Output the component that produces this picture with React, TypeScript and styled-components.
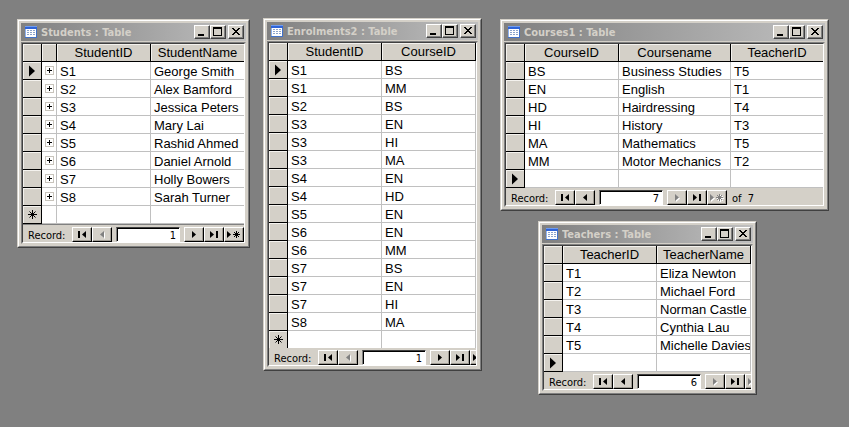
import React from "react";
import styled, { createGlobalStyle } from "styled-components";

const face = "#d4d0c8";
const tahoma = '"DejaVu Sans Condensed", Tahoma, "DejaVu Sans", sans-serif';

const GlobalStyle = createGlobalStyle`
  *, *::before, *::after { box-sizing: border-box; }
  body { margin: 0; background: #808080; }
`;

const Desktop = styled.main`
  position: relative;
  min-height: 100vh;
  overflow: hidden;
  background: #808080;
  color: #000;
`;

const Frame = styled.section<{ $x: number; $y: number; $w: number }>`
  position: absolute;
  left: ${(p) => p.$x}px;
  top: ${(p) => p.$y}px;
  width: ${(p) => p.$w}px;
  background: ${face};
  border: 1px solid;
  border-color: ${face} #404040 #404040 ${face};
`;

const FrameEdge = styled.div`
  padding: 2px;
  border: 1px solid;
  border-color: #fff #808080 #808080 #fff;
`;

const TitleBar = styled.header`
  display: flex;
  align-items: center;
  height: 18px;
  margin-bottom: 1px;
  padding: 0 2px 0 4px;
  background: linear-gradient(to right, #808080, #c0c0c0);
`;

const Title = styled.h2`
  flex: 1;
  min-width: 0;
  margin: 0 0 0 3px;
  padding-top: 1px;
  overflow: hidden;
  white-space: nowrap;
  color: ${face};
  font: bold 11px/17px ${tahoma};
`;

const Caption = styled.button<{ $gap?: boolean }>`
  flex: none;
  width: 16px;
  height: 14px;
  margin: 0 0 0 ${(p) => (p.$gap ? 2 : 0)}px;
  padding: 0;
  border: 1px solid;
  border-color: #fff #404040 #404040 #fff;
  box-shadow: inset -1px -1px #808080;
  background: ${face};
  svg { display: block; }
`;

const Client = styled.div`
  border: 1px solid;
  border-color: #808080 ${face} ${face} #808080;
`;

const Well = styled.div`
  border: 1px solid;
  border-color: #404040 #fff #fff #404040;
`;

const Sheet = styled.table`
  width: 100%;
  table-layout: fixed;
  border-collapse: separate;
  border-spacing: 0;
  background: #fff;
  font: 13px/17px "Liberation Sans", Arial, sans-serif;
`;

const Col = styled.col<{ $w?: number }>`
  width: ${(p) => (p.$w ? `${p.$w}px` : "auto")};
`;

const Head = styled.th<{ $open?: boolean }>`
  height: 18px;
  padding: 0;
  background: ${face};
  border-right: ${(p) => (p.$open ? 0 : 1)}px solid #000;
  border-bottom: 1px solid #000;
  box-shadow: inset 1px 1px #f4f2ee;
  font-weight: normal;
  text-align: center;
  white-space: nowrap;
`;

const Selector = styled.th<{ $last?: boolean }>`
  height: ${(p) => (p.$last ? 17 : 18)}px;
  padding: 0;
  background: ${face};
  border-right: 1px solid #000;
  border-bottom: ${(p) => (p.$last ? 0 : 1)}px solid #000;
  box-shadow: inset 1px 1px #f4f2ee;
  line-height: 0;
  svg { display: block; margin: 0 auto; }
`;

const Cell = styled.td<{ $open?: boolean; $last?: boolean }>`
  height: ${(p) => (p.$last ? 17 : 18)}px;
  padding: 2px 0 0 3px;
  overflow: hidden;
  white-space: nowrap;
  line-height: 15px;
  border-right: ${(p) => (p.$open ? 0 : 1)}px solid #c0c0c0;
  border-bottom: ${(p) => (p.$last ? 0 : 1)}px solid #c0c0c0;
`;

const Expander = styled.button`
  display: block;
  width: 9px;
  height: 9px;
  padding: 0;
  border: 1px solid #c8c4bc;
  background: #fff;
  svg { display: block; }
`;

const ExpandCell = styled(Cell)`
  padding-top: 0;
`;

const Nav = styled.nav<{ $ruled?: boolean }>`
  display: flex;
  align-items: flex-end;
  height: ${(p) => (p.$ruled ? 18 : 17)}px;
  overflow: hidden;
  background: ${face};
  border-top: ${(p) => (p.$ruled ? 1 : 0)}px solid #808080;
  font: 11px/13px ${tahoma};
  white-space: pre;
`;

const NavLabel = styled.label`
  flex: none;
  width: 49px;
  padding-left: 5px;
`;

const NavButton = styled.button`
  flex: none;
  width: 20px;
  height: 15px;
  padding: 0;
  border: 1px solid;
  border-color: #fff #000 #000 #fff;
  box-shadow: inset -1px -1px #a09c94;
  background: ${face};
  svg { display: block; }
`;

const RecordBox = styled.input`
  flex: none;
  width: 64px;
  height: 15px;
  margin: 0 4px;
  padding: 1px 3px 0 0;
  border: 1px solid;
  border-color: #404040 #fff #fff #808080;
  border-radius: 0;
  box-shadow: inset 1px 1px #000;
  background: #fff;
  font: 11px/12px ${tahoma};
  text-align: right;
  outline: none;
`;

const Total = styled.span`
  padding-left: 5px;
`;

const TableIcon = () => (
  <svg width="13" height="13" shapeRendering="crispEdges" aria-hidden="true">
    <rect width="12" height="12" fill="#fff" />
    <rect width="12" height="3" fill="#2f64d8" />
    <rect width="12" height="1" fill="#6f9cf0" />
    <rect y="3" width="1" height="9" fill="#8fb2ee" />
    <rect x="11" y="3" width="1" height="9" fill="#4272c8" />
    <rect y="11" width="12" height="1" fill="#4272c8" />
    <path d="M2 4h2v1H2zM5 4h2v1H5zM8 4h2v1H8zM2 6h2v1H2zM5 6h2v1H5zM8 6h2v1H8zM2 8h2v1H2zM5 8h2v1H5zM8 8h2v1H8z" fill="#8ca4cc" />
  </svg>
);

const starPath = "M4.5 0v9M0 4.5h9M1.5 1.5l6 6M7.5 1.5l-6 6";

const Marker = ({ kind }: { kind?: "current" | "new" }) => {
  if (kind === "current")
    return (
      <svg width="8" height="12" aria-label="Current record">
        <path d="M1 0.5L7 6L1 11.5z" fill="#000" />
      </svg>
    );
  if (kind === "new")
    return (
      <svg width="9" height="9" aria-label="New record">
        <path d={starPath} stroke="#000" fill="none" />
      </svg>
    );
  return null;
};

type Glyph = "first" | "prev" | "next" | "last" | "new";
const glyphs: Record<Glyph, React.ReactNode> = {
  first: (
    <>
      <path d="M5 3h2v7H5z" />
      <path d="M13 3v7L9 6.5z" />
    </>
  ),
  prev: <path d="M11 3v7L7 6.5z" />,
  next: <path d="M7 3v7l4-3.5z" />,
  last: (
    <>
      <path d="M5 3v7l4-3.5z" />
      <path d="M11 3h2v7h-2z" />
    </>
  ),
  new: (
    <>
      <path d="M2 3v7l4-3.5z" />
      <path
        d="M11.5 3v7M8 6.5h7M9 4l5 5M14 4l-5 5"
        fill="none"
        stroke="currentColor"
      />
    </>
  ),
};
const glyphNames: Record<Glyph, string> = {
  first: "First record",
  prev: "Previous record",
  next: "Next record",
  last: "Last record",
  new: "New record",
};

const Step = ({ glyph, off }: { glyph: Glyph; off?: boolean }) => (
  <NavButton type="button" aria-label={glyphNames[glyph]} disabled={off}>
    <svg width="18" height="13" aria-hidden="true">
      {off && (
        <g transform="translate(1 1)" fill="#fff" color="#fff">
          {glyphs[glyph]}
        </g>
      )}
      <g fill="currentColor" color={off ? "#808080" : "#000"}>
        {glyphs[glyph]}
      </g>
    </svg>
  </NavButton>
);

interface Datasheet {
  name: string;
  x: number;
  y: number;
  width: number;
  columns: { label: string; width?: number }[];
  rows: string[][];
  current: number;
  record: number;
  expandable?: boolean;
  openEdge?: boolean;
  shortEnd?: boolean;
  atEnd?: boolean;
  total?: number;
}

const sheets: Datasheet[] = [
  {
    name: "Students",
    x: 17,
    y: 19,
    width: 233,
    columns: [{ label: "StudentID", width: 94 }, { label: "StudentName" }],
    rows: [
      ["S1", "George Smith"],
      ["S2", "Alex Bamford"],
      ["S3", "Jessica Peters"],
      ["S4", "Mary Lai"],
      ["S5", "Rashid Ahmed"],
      ["S6", "Daniel Arnold"],
      ["S7", "Holly Bowers"],
      ["S8", "Sarah Turner"],
    ],
    current: 0,
    record: 1,
    expandable: true,
    openEdge: true,
  },
  {
    name: "Enrolments2",
    x: 263,
    y: 18,
    width: 219,
    columns: [{ label: "StudentID", width: 94 }, { label: "CourseID" }],
    rows: [
      ["S1", "BS"],
      ["S1", "MM"],
      ["S2", "BS"],
      ["S3", "EN"],
      ["S3", "HI"],
      ["S3", "MA"],
      ["S4", "EN"],
      ["S4", "HD"],
      ["S5", "EN"],
      ["S6", "EN"],
      ["S6", "MM"],
      ["S7", "BS"],
      ["S7", "EN"],
      ["S7", "HI"],
      ["S8", "MA"],
    ],
    current: 0,
    record: 1,
    shortEnd: true,
  },
  {
    name: "Courses1",
    x: 500,
    y: 19,
    width: 329,
    columns: [
      { label: "CourseID", width: 94 },
      { label: "Coursename", width: 112 },
      { label: "TeacherID" },
    ],
    rows: [
      ["BS", "Business Studies", "T5"],
      ["EN", "English", "T1"],
      ["HD", "Hairdressing", "T4"],
      ["HI", "History", "T3"],
      ["MA", "Mathematics", "T5"],
      ["MM", "Motor Mechanics", "T2"],
    ],
    current: 6,
    record: 7,
    openEdge: true,
    atEnd: true,
    total: 7,
  },
  {
    name: "Teachers",
    x: 538,
    y: 221,
    width: 219,
    columns: [{ label: "TeacherID", width: 94 }, { label: "TeacherName" }],
    rows: [
      ["T1", "Eliza Newton"],
      ["T2", "Michael Ford"],
      ["T3", "Norman Castle"],
      ["T4", "Cynthia Lau"],
      ["T5", "Michelle Davies"],
    ],
    current: 5,
    record: 6,
    atEnd: true,
  },
];

const SheetWindow = ({ sheet }: { sheet: Datasheet }) => {
  const { columns, rows, current, expandable, openEdge, atEnd } = sheet;
  const allRows = [...rows, columns.map(() => "")];
  const isOpen = (i: number) => openEdge && i === columns.length - 1;
  const boxId = `${sheet.name}-record`;
  return (
    <Frame $x={sheet.x} $y={sheet.y} $w={sheet.width}>
      <FrameEdge>
        <TitleBar>
          <TableIcon />
          <Title>{sheet.name} : Table</Title>
          <Caption type="button" aria-label="Minimize">
            <svg width="14" height="12" shapeRendering="crispEdges">
              <rect x="3" y="8" width="6" height="2" />
            </svg>
          </Caption>
          <Caption type="button" aria-label="Maximize">
            <svg width="14" height="12" shapeRendering="crispEdges">
              <path d="M2 1h9v9H2zM3 3v6h7V3z" fillRule="evenodd" />
            </svg>
          </Caption>
          <Caption type="button" aria-label="Close" $gap>
            <svg width="14" height="12" shapeRendering="crispEdges">
              <path d="M3 2h2v1h1v1h2V3h1V2h2v1h-1v1H9v1H8v1h1v1h1v1h1v1H9V8H8V7H6v1H5v1H3V8h1V7h1V6h1V5H5V4H4V3H3z" />
            </svg>
          </Caption>
        </TitleBar>
        <Client>
          <Well>
            <Sheet>
              <colgroup>
                <Col $w={19} />
                {expandable && <Col $w={15} />}
                {columns.map((c) => (
                  <Col key={c.label} $w={c.width} />
                ))}
              </colgroup>
              <thead>
                <tr>
                  <Head />
                  {expandable && <Head />}
                  {columns.map((c, i) => (
                    <Head key={c.label} scope="col" $open={isOpen(i)}>
                      {c.label}
                    </Head>
                  ))}
                </tr>
              </thead>
              <tbody>
                {allRows.map((row, r) => {
                  const blank = r === rows.length;
                  const last = blank && sheet.shortEnd;
                  const kind =
                    r === current ? "current" : blank ? "new" : undefined;
                  return (
                    <tr key={r}>
                      <Selector scope="row" $last={last}>
                        <Marker kind={kind} />
                      </Selector>
                      {expandable && (
                        <ExpandCell>
                          {!blank && (
                            <Expander
                              type="button"
                              aria-label={`Expand ${row[0]}`}
                            >
                              <svg
                                width="7"
                                height="7"
                                shapeRendering="crispEdges"
                              >
                                <path d="M3 1h1v2h2v1H4v2H3V4H1V3h2z" />
                              </svg>
                            </Expander>
                          )}
                        </ExpandCell>
                      )}
                      {row.map((value, i) => (
                        <Cell key={i} $open={isOpen(i)} $last={last}>
                          {value}
                        </Cell>
                      ))}
                    </tr>
                  );
                })}
              </tbody>
            </Sheet>
            <Nav $ruled={expandable}>
              <NavLabel htmlFor={boxId}>Record:</NavLabel>
              <Step glyph="first" />
              <Step glyph="prev" off={!atEnd} />
              <RecordBox id={boxId} type="text" defaultValue={sheet.record} />
              <Step glyph="next" off={atEnd} />
              <Step glyph="last" />
              <Step glyph="new" off={atEnd} />
              {sheet.total && <Total>of  {sheet.total}</Total>}
            </Nav>
          </Well>
        </Client>
      </FrameEdge>
    </Frame>
  );
};

export default function App() {
  return (
    <>
      <GlobalStyle />
      <Desktop>
        {sheets.map((s) => (
          <SheetWindow key={s.name} sheet={s} />
        ))}
      </Desktop>
    </>
  );
}
